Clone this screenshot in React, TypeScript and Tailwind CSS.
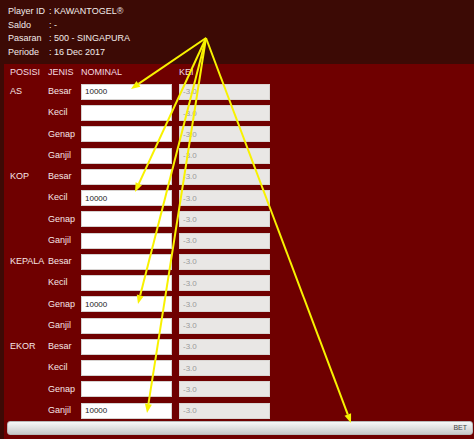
import React from 'react'

const apex = { x: 206, y: 38 }
const tips = [
  { x: 131, y: 89 },
  { x: 135, y: 192 },
  { x: 138, y: 304 },
  { x: 147, y: 413 },
  { x: 351, y: 423 },
]

const groups = [
  { posisi: 'AS', values: ['10000', '', '', ''] },
  { posisi: 'KOP', values: ['', '10000', '', ''] },
  { posisi: 'KEPALA', values: ['', '', '10000', ''] },
  { posisi: 'EKOR', values: ['', '', '', '10000'] },
]
const jenis = ['Besar', 'Kecil', 'Genap', 'Ganjil']

function Arrow({ tip }: { tip: { x: number; y: number } }) {
  const dx = tip.x - apex.x
  const dy = tip.y - apex.y
  const len = Math.sqrt(dx * dx + dy * dy)
  const ux = dx / len
  const uy = dy / len
  const headLen = 9
  const headW = 3.5
  const bx = tip.x - ux * headLen
  const by = tip.y - uy * headLen
  const p1 = `${bx - uy * headW},${by + ux * headW}`
  const p2 = `${bx + uy * headW},${by - ux * headW}`
  return (
    <g>
      <line x1={apex.x} y1={apex.y} x2={bx} y2={by} stroke="#f8f200" strokeWidth={2} />
      <polygon points={`${tip.x},${tip.y} ${p1} ${p2}`} fill="#f8f200" />
    </g>
  )
}

export default function App() {
  return (
    <div className="relative w-[474px] h-[439px] overflow-hidden bg-[#3c0a05] font-['Liberation_Sans',Arial,sans-serif] text-[9px]">
      {/* player info */}
      <div className="pl-[8px] pt-[5px] pb-[4px] text-[#f3ecea]">
        {[
          ['Player ID', 'KAWANTOGEL®'],
          ['Saldo', '-'],
          ['Pasaran', '500 - SINGAPURA'],
          ['Periode', '16 Dec 2017'],
        ].map(([label, value]) => (
          <div key={label} className="flex h-[13.7px] items-center">
            <span className="w-[41px]">{label}</span>
            <span>: {value}</span>
          </div>
        ))}
      </div>

      {/* bet form */}
      <div className="ml-[4px] h-[375px] bg-[#6f0000] text-[#f6e6e6]">
        <div className="flex h-[17.4px] items-center pl-[6px] text-[#f5dbe0]">
          <span className="w-[38px]">POSISI</span>
          <span className="w-[33px]">JENIS</span>
          <span className="w-[98px]">NOMINAL</span>
          <span>KEI</span>
        </div>
        {groups.map((g) =>
          jenis.map((j, i) => (
            <div key={g.posisi + j} className="flex h-[21.27px] items-center pl-[6px]">
              <span className="w-[38px]">{i === 0 ? g.posisi : ''}</span>
              <span className="w-[33px]">{j}</span>
              <input
                readOnly
                value={g.values[i]}
                className="h-[16px] w-[91px] border border-[#d6d2d0] bg-white pl-[3px] text-[8px] text-[#222] outline-none"
              />
              <input
                readOnly
                value="-3.0"
                className="ml-[7px] h-[16px] w-[91px] border border-[#d9d5d2] bg-[#e9e7e5] pl-[3px] text-[8px] text-[#9a9a9a] outline-none"
              />
            </div>
          ))
        )}
        <div className="ml-[3px] mr-[1px] flex h-[14px] items-center justify-end rounded-[3px] border border-[#b9b9b9] bg-gradient-to-b from-[#f7f7f7] to-[#c9c9c9] pr-[5px] text-[7px] text-[#444]">
          BET
        </div>
      </div>

      {/* annotation arrows */}
      <svg className="pointer-events-none absolute left-0 top-0" width={474} height={439}>
        {tips.map((t, i) => (
          <Arrow key={i} tip={t} />
        ))}
      </svg>
    </div>
  )
}
